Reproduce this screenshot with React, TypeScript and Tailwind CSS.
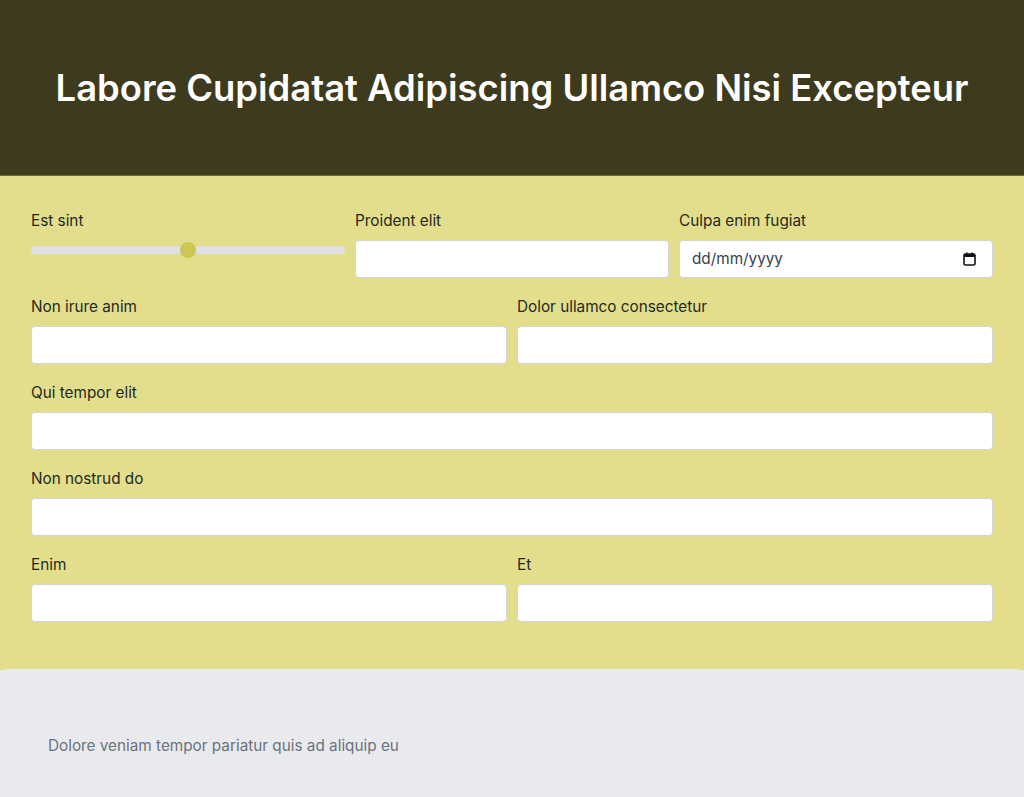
import React from 'react';

const Field: React.FC<{ label: string; className?: string }> = ({ label, className }) => (
  <div className={className}>
    <label className="block text-[15.3px] leading-6 pt-px text-[#1f2a1f] mb-[7px]">{label}</label>
    <input
      type="text"
      className="block w-full h-[38px] rounded-[4px] border border-[#d1d5db] bg-white px-3 text-base outline-none"
    />
  </div>
);

export default function App() {
  return (
    <div className="min-h-screen w-full bg-[#e9eaed] font-['Inter',sans-serif]">
      <header className="h-[176px] flex items-center justify-center bg-[#3d3a1d] border-b border-[#6b6638]">
        <h1 className="text-[36.4px] leading-10 font-semibold text-white">
          Labore Cupidatat Adipiscing Ullamco Nisi Excepteur
        </h1>
      </header>

      <form className="bg-[#e3de8c] px-[31px] pt-8 pb-12 flex flex-col gap-4">
        <div className="grid grid-cols-3 gap-x-[10px]">
          <div>
            <label className="block text-[15.3px] leading-6 pt-px text-[#1f2a1f] mb-[7px]">Est sint</label>
            <div className="relative h-5 flex items-center">
              <div className="w-full h-2 rounded-full bg-[#dfe0e3]" />
              <div className="absolute left-1/2 top-1/2 -translate-x-1/2 -translate-y-1/2 w-4 h-4 rounded-full bg-[#ccc654]" />
            </div>
          </div>
          <Field label="Proident elit" />
          <div>
            <label className="block text-[15.3px] leading-6 pt-px text-[#1f2a1f] mb-[7px]">Culpa enim fugiat</label>
            <div className="flex items-center justify-between w-full h-[38px] rounded-[4px] border border-[#d1d5db] bg-white pl-3 pr-4">
              <span className="text-[15.3px] text-[#374151]">dd/mm/yyyy</span>
              <svg width="13" height="14" viewBox="0 0 13 14" fill="none">
                <rect x="1" y="2" width="11" height="11" rx="1.5" stroke="#111" strokeWidth="1.6" />
                <rect x="1" y="2" width="11" height="3" fill="#111" />
                <rect x="3" y="0.5" width="1.6" height="3" fill="#111" />
                <rect x="8.4" y="0.5" width="1.6" height="3" fill="#111" />
              </svg>
            </div>
          </div>
        </div>

        <div className="grid grid-cols-2 gap-x-[10px]">
          <Field label="Non irure anim" />
          <Field label="Dolor ullamco consectetur" />
        </div>

        <Field label="Qui tempor elit" />
        <Field label="Non nostrud do" />

        <div className="grid grid-cols-2 gap-x-[10px]">
          <Field label="Enim" />
          <Field label="Et" />
        </div>
      </form>

      <footer className="bg-[#e9eaed] rounded-t-lg px-12 pt-[65px] pb-16 -mt-px">
        <p className="text-[15.3px] leading-6 text-[#6b7280]">Dolore veniam tempor pariatur quis ad aliquip eu</p>
      </footer>
    </div>
  );
}
